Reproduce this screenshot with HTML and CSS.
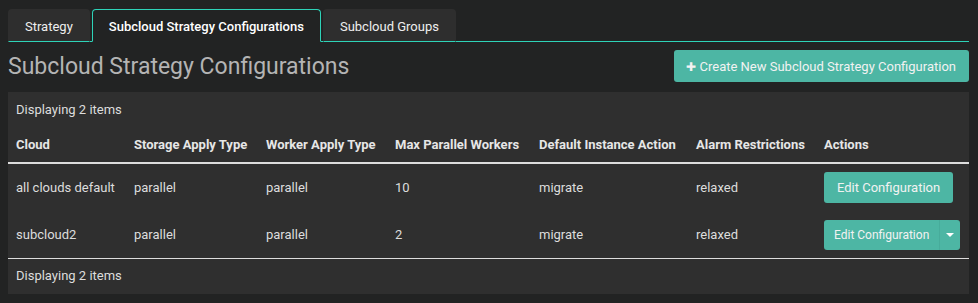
FILE: index.html
```html
<!DOCTYPE html>
<html lang="en">

<head>
    <meta charset="UTF-8">
    <meta name="viewport" content="width=device-width, initial-scale=1.0">
    <title>Subcloud Strategy Configurations</title>

    <link rel="stylesheet" href="styles.css">
</head>

<body>

    <ul class="tabs">
        <li><a href="#">Strategy</a></li>
        <li class="active"><a href="#">Subcloud Strategy Configurations</a></li>
        <li><a href="#">Subcloud Groups</a></li>
    </ul>

    <div class="page-header">
        <h1>Subcloud Strategy Configurations</h1>
        <button class="btn btn-create"><span class="plus">&#10010;</span> Create New Subcloud Strategy Configuration</button>
    </div>

    <div class="panel">
        <table class="datatable">
            <colgroup>
                <col class="c-cloud">
                <col class="c-storage">
                <col class="c-worker">
                <col class="c-max">
                <col class="c-action">
                <col class="c-alarm">
                <col class="c-actions">
            </colgroup>
            <thead>
                <tr class="summary">
                    <td colspan="7">Displaying 2 items</td>
                </tr>
                <tr class="heading">
                    <th>Cloud</th>
                    <th>Storage Apply Type</th>
                    <th>Worker Apply Type</th>
                    <th>Max Parallel Workers</th>
                    <th>Default Instance Action</th>
                    <th>Alarm Restrictions</th>
                    <th>Actions</th>
                </tr>
            </thead>
            <tbody>
                <tr>
                    <td>all clouds default</td>
                    <td>parallel</td>
                    <td>parallel</td>
                    <td>10</td>
                    <td>migrate</td>
                    <td>relaxed</td>
                    <td><button class="btn">Edit Configuration</button></td>
                </tr>
                <tr>
                    <td>subcloud2</td>
                    <td>parallel</td>
                    <td>parallel</td>
                    <td>2</td>
                    <td>migrate</td>
                    <td>relaxed</td>
                    <td>
                        <div class="btn-group">
                            <button class="btn">Edit Configuration</button><button class="btn caret-btn"><span class="caret"></span></button>
                        </div>
                    </td>
                </tr>
            </tbody>
            <tfoot>
                <tr class="summary">
                    <td colspan="7">Displaying 2 items</td>
                </tr>
            </tfoot>
        </table>
    </div>

</body>

</html>
```

FILE: styles.css
```css
body {
    font-family: Roboto, "Liberation Sans", sans-serif;
    font-size: 13px;
    background-color: #222323;
    color: #dddddd;
    margin: 0;
    padding: 9px 9px 0 8px;
}

.tabs {
    list-style-type: none;
    margin: 0;
    padding: 0;
    display: flex;
    border-bottom: 1px solid #2ed3b8;
}

.tabs li {
    margin-right: 2px;
    margin-bottom: -1px;
}

.tabs li a {
    display: block;
    height: 33px;
    line-height: 33px;
    padding: 0 16px;
    box-sizing: border-box;
    background-color: #2e2e2e;
    color: #eeeeee;
    text-decoration: none;
    border: 1px solid transparent;
    border-bottom-color: #2ed3b8;
    border-radius: 4px 4px 0 0;
}

.tabs li.active a {
    background-color: #222323;
    border-color: #2ed3b8;
    border-bottom-color: #222323;
    font-weight: 500;
    color: #ffffff;
}

.page-header {
    display: flex;
    justify-content: space-between;
    align-items: center;
    padding: 8px 0 9px;
}

.page-header h1 {
    margin: 0;
    font-size: 23px;
    font-weight: 400;
    color: #b4b4b4;
}

.btn {
    font-family: inherit;
    font-size: 13px;
    color: #f2f2f2;
    background-color: #4db6a4;
    border: none;
    border-radius: 3px;
    height: 31px;
    padding: 0 13px;
    cursor: pointer;
}

.btn-create {
    height: 32px;
    padding: 0 13px 0 12px;
}

.plus {
    font-size: 12px;
}

.panel {
    margin-top: 1px;
    background-color: #2f2f2f;
}

.datatable {
    width: 100%;
    border-collapse: collapse;
    table-layout: fixed;
}

.datatable td,
.datatable th {
    padding: 8px;
    text-align: left;
    line-height: 18px;
    white-space: nowrap;
}

.datatable thead .summary td {
    padding: 9px 8px 7px;
}

.datatable .heading th {
    font-weight: 700;
    color: #e6e6e6;
    padding: 10px 8px 8px;
    border-bottom: 2px solid #dddddd;
}

.datatable tbody td {
    height: 31px;
}

.datatable tfoot td {
    padding: 8px 8px 9px;
    border-top: 1px solid #dddddd;
}

.c-cloud { width: 118px; }
.c-storage { width: 132px; }
.c-worker { width: 129px; }
.c-max { width: 144px; }
.c-action { width: 157px; }
.c-alarm { width: 128px; }

.btn-group {
    display: inline-flex;
    vertical-align: middle;
}

.btn-group .btn {
    height: 30px;
    font-size: 12px;
    border-radius: 3px 0 0 3px;
    padding: 0 10px;
}

.btn-group .caret-btn {
    width: 21px;
    padding: 0;
    border-radius: 0 3px 3px 0;
    border-left: 1px solid #47ac9b;
}

.caret {
    display: inline-block;
    border-left: 4px solid transparent;
    border-right: 4px solid transparent;
    border-top: 4px solid #ffffff;
    vertical-align: middle;
}
```
